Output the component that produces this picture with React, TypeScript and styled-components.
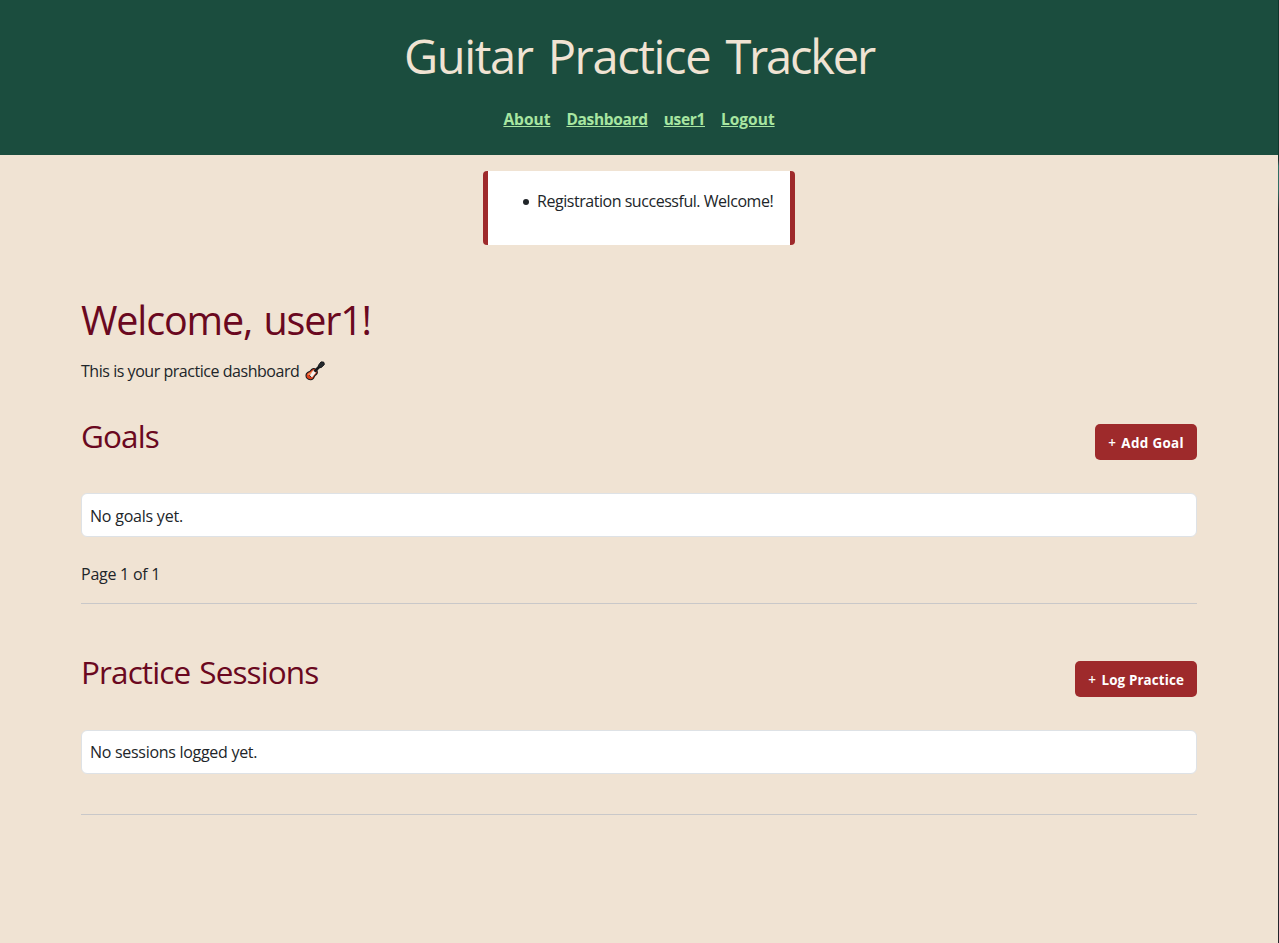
import React from "react";
import styled, { createGlobalStyle } from "styled-components";

const GlobalStyle = createGlobalStyle`
  *, *::before, *::after { box-sizing: border-box; }
  body {
    margin: 0;
    background: #f0e3d3;
    color: #212529;
    font-family: "Segoe UI", "Open Sans", "Noto Sans", sans-serif;
    font-size: 16px;
    line-height: 24px;
  }
  h1, h2, p, ul { margin: 0; font-weight: 400; }
`;

const Page = styled.div`
  height: 943px;
  overflow: hidden;
  display: grid;
  grid-template-columns: 1fr 1px;
`;

const WindowEdge = styled.div`
  background: linear-gradient(#10352c 0, #10352c 155px, #1f2a2c 160px, #2f6d62 166px, #2f6d62 190px, #22282b 210px, #22252b 100%);
`;

const Header = styled.header`
  height: 155px;
  padding-top: 27px;
  background: #1b4d3e;
  text-align: center;
`;

const Label = styled.span<{ $ls?: number; $ws?: number }>`
  letter-spacing: ${(p) => p.$ls ?? 0}px;
  word-spacing: ${(p) => p.$ws ?? 0}px;
`;

const Brand = styled.h1`
  height: 58px;
  color: #f0e3d3;
  font-size: 47px;
  line-height: 58px;
  word-spacing: 3px;
`;

const Nav = styled.nav`
  display: flex;
  justify-content: center;
  gap: 16px;
  margin-top: 22px;
`;

const NavLink = styled.a<{ $ls?: number }>`
  color: #a8e6a1;
  font-weight: 700;
  font-size: 15.5px;
  letter-spacing: ${(p) => p.$ls ?? 0}px;
  text-decoration: underline;
`;

const Notice = styled.div`
  width: 312px;
  height: 74px;
  margin: 16px auto 0;
  padding: 18px 0 0 35px;
  background: #fff;
  border: solid #9e2a2b;
  border-width: 0 5px;
  border-radius: 4px;
`;

const Messages = styled.ul`
  padding: 0;
  list-style: none;
  white-space: nowrap;
`;

const Message = styled.li`
  display: flex;
  align-items: center;
  gap: 8px;

  &::before {
    content: "";
    width: 6px;
    height: 6px;
    margin-top: 2px;
    border-radius: 50%;
    background: #212529;
  }
`;

const Main = styled.main`
  width: 1116px;
  margin: 51px auto 0;
`;

const Greeting = styled.h1`
  color: #6a0820;
  font-size: 39.5px;
  line-height: 48px;
`;

const Intro = styled.p`
  display: flex;
  align-items: center;
  gap: 6px;
  height: 24px;
  margin-top: 15px;
`;

const SectionHead = styled.div<{ $top: number; $height: number }>`
  display: flex;
  justify-content: space-between;
  height: ${(p) => p.$height}px;
  margin-top: ${(p) => p.$top}px;
`;

const SectionTitle = styled.h2`
  color: #6a0820;
  font-size: 31.5px;
  line-height: 38px;
`;

const Button = styled.button`
  align-self: flex-end;
  height: 36px;
  padding: 2px 13px 0;
  border: 0;
  border-radius: 5px;
  background: #9e2a2b;
  color: #fff;
  font: 700 13.4px "Segoe UI", "Open Sans", "Noto Sans", sans-serif;
  white-space: nowrap;
`;

const Plus = styled.span`
  margin-right: 2px;
  font-weight: 600;
`;

const EmptyCard = styled.div<{ $pad?: number }>`
  height: 44px;
  margin-top: 33px;
  padding: ${(p) => p.$pad ?? 10}px 8px 0;
  background: #fff;
  border: 1px solid #dee2e6;
  border-radius: 6px;
`;

const Paging = styled.p`
  margin-top: 25px;
`;

const Rule = styled.div<{ $top: number }>`
  height: 1px;
  margin-top: ${(p) => p.$top}px;
  background: #c9c8c9;
`;

function Guitar() {
  return (
    <svg width="20" height="20" viewBox="0 0 20 20" aria-label="guitar">
      <path
        d="M1 14.200c.2-2.300 2-3.200 3.500-3.700 1.200-.5 1.500-1.900 2.800-2.600 1.600-.9 3.600 0 4.400 1.300.9 1.500.7 3.300-.5 4.300-.9.800-1.500.9-1.900 2.200-.6 1.900-2 3.200-4 3-2.400-.2-4.500-2-4.300-4.500Z"
        fill="#e0401c"
        stroke="#17191c"
        strokeWidth="1.100"
      />
      <path d="M2.300 13.600c.8-1.700 2.300-1.500 3.600-2.600l2-1.800-2.400 5.900Z" fill="#f58a55" />
      <path d="M4.800 14.700 8.300 8.900l2.800 2.500-1.700 2-2.400 3.200Z" fill="#f4f1ee" />
      <path d="m4.200 14.200 2.100 2" stroke="#333" strokeWidth="1" />
      <path d="m9.500 10.600 5.900-6.100" stroke="#17191c" strokeWidth="2.800" />
      <path d="m13.500 4.200 2.500-3.300 2.700.2.700 2.400-3.100 3-2 .2Z" fill="#24292d" stroke="#17191c" strokeLinejoin="round" />
    </svg>
  );
}

export default function App() {
  return (
    <>
      <GlobalStyle />
      <Page>
        <div>
          <Header>
            <Brand>
              <Label $ls={-1.4}>Guitar</Label> <Label $ls={-1.4}>Practice</Label>{" "}
              <Label $ls={-2.2}>Tracker</Label>
            </Brand>
            <Nav>
              <NavLink>About</NavLink>
              <NavLink $ls={-0.33}>Dashboard</NavLink>
              <NavLink $ls={-0.35}>user1</NavLink>
              <NavLink>Logout</NavLink>
            </Nav>
          </Header>
          <Notice>
            <Messages>
              <Message><Label $ls={-0.46}>Registration successful. Welcome!</Label></Message>
            </Messages>
          </Notice>
          <Main>
            <Greeting><Label $ls={-1.15} $ws={2.2}>Welcome, user1!</Label></Greeting>
            <Intro><Label $ls={-0.46}>This is your practice dashboard</Label><Guitar /></Intro>
            <SectionHead $top={34} $height={43}>
              <SectionTitle><Label $ls={-0.9}>Goals</Label></SectionTitle>
              <Button><Plus>+</Plus> <Label $ls={0.35}>Add Goal</Label></Button>
            </SectionHead>
            <EmptyCard><Label $ls={-0.22}>No goals yet.</Label></EmptyCard>
            <Paging><Label $ls={-0.25}>Page 1 of 1</Label></Paging>
            <Rule $top={17} />
            <SectionHead $top={49} $height={44}>
              <SectionTitle><Label $ls={-0.9} $ws={1.8}>Practice Sessions</Label></SectionTitle>
              <Button><Plus>+</Plus> <Label $ls={0.12}>Log Practice</Label></Button>
            </SectionHead>
            <EmptyCard $pad={9}><Label $ls={-0.29}>No sessions logged yet.</Label></EmptyCard>
            <Rule $top={40} />
          </Main>
        </div>
        <WindowEdge />
      </Page>
    </>
  );
}
